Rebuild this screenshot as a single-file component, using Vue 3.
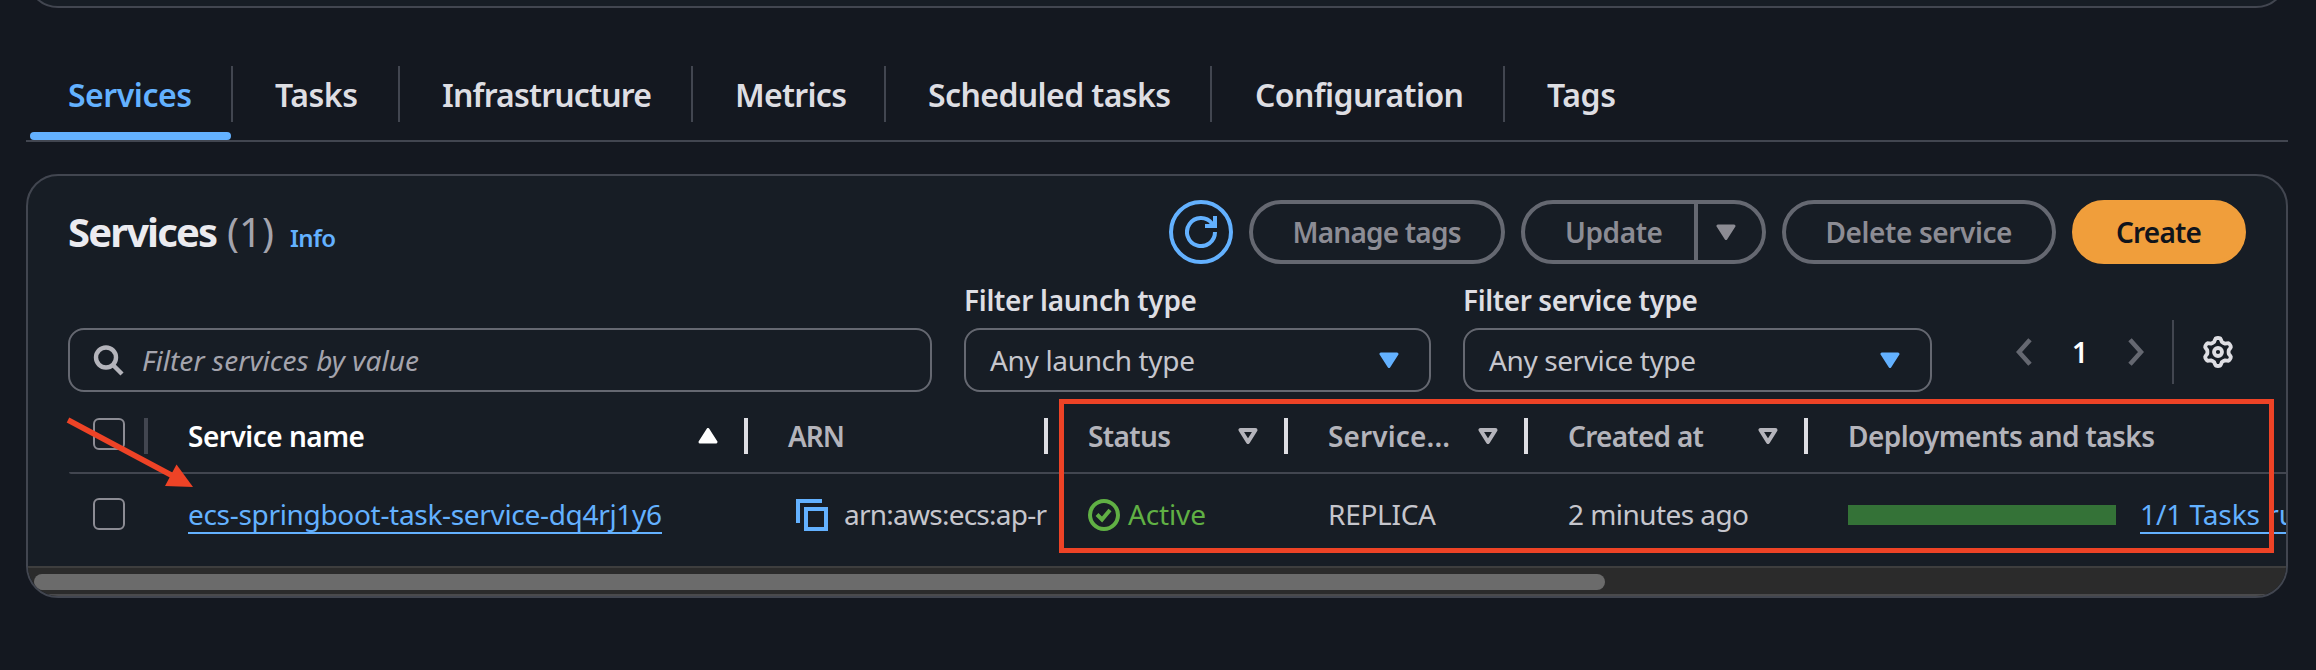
<script setup>
// Adjusts letter spacing so that a label occupies the given width.
const vFit = {
  mounted(el, { value }) {
    const natural = el.getBoundingClientRect().width
    const gaps = el.textContent.length - 1
    const spacing = (value - natural) / gaps
    el.style.letterSpacing = spacing + 'px'
    el.style.marginRight = -spacing + 'px'
  },
}

const tabs = [
  { label: 'Services', fit: 124, tab: 'services' },
  { label: 'Tasks', fit: 83, tab: 'tasks' },
  { label: 'Infrastructure', fit: 210, tab: 'infrastructure' },
  { label: 'Metrics', fit: 112, tab: 'metrics' },
  { label: 'Scheduled tasks', fit: 243, tab: 'scheduled' },
  { label: 'Configuration', fit: 209, tab: 'configuration' },
  { label: 'Tags', fit: 69, tab: 'tags' },
]

const columns = [
  { label: 'Service name', fit: 177, sort: 'asc' },
  { label: 'ARN', fit: 57 },
  { label: 'Status', fit: 83, sort: 'none' },
  { label: 'Service...', fit: 122, sort: 'none' },
  { label: 'Created at', fit: 136, sort: 'none' },
  { label: 'Deployments and tasks', fit: 307 },
]

// Six-lobed gear outline.
const gear = Array.from({ length: 72 }, (_, i) => {
  const a = (i / 72) * Math.PI * 2
  const r = 12.3 + 1.75 * Math.tanh(2 * Math.cos(6 * (a + Math.PI / 2)))
  return `${(16 + r * Math.cos(a)).toFixed(2)},${(16 + r * Math.sin(a)).toFixed(2)}`
}).join(' ')
</script>

<template>
  <div class="page">
    <div class="previous-card"></div>

    <nav class="tabs">
      <div v-for="(t, i) in tabs" :key="t.tab" class="tab" :class="['tab-' + t.tab, { active: i === 0 }]">
        <span v-fit="t.fit" class="txt">{{ t.label }}</span>
      </div>
    </nav>

    <section class="card">
      <header class="card-head">
        <h2 class="title"><span v-fit="150" class="txt">Services</span></h2>
        <span v-fit="47" class="txt count">(1)</span>
        <a v-fit="46" class="txt info">Info</a>
        <div class="actions">
          <button class="btn refresh">
            <svg width="32" height="32" viewBox="0 0 32 32" fill="none" stroke="currentColor" stroke-width="4">
              <path d="M30 16A14 14 0 1 1 27 7.4L29 10" /><path d="M30 0V10H20" />
            </svg>
          </button>
          <button class="btn manage"><span v-fit="169" class="txt">Manage tags</span></button>
          <div class="btn split">
            <span class="split-main"><span v-fit="98" class="txt">Update</span></span>
            <span class="split-arrow">
              <svg width="20" height="16" viewBox="0 0 20 16"><path class="solid" d="M2 2H18L10 14.5Z" /></svg>
            </span>
          </div>
          <button class="btn delete"><span v-fit="187" class="txt">Delete service</span></button>
          <button class="btn create"><span v-fit="86" class="txt">Create</span></button>
        </div>
      </header>

      <div class="filters">
        <div class="field search">
          <svg width="32" height="32" viewBox="0 0 32 32" fill="none" stroke="currentColor" stroke-width="4.4">
            <circle cx="13" cy="13.5" r="10" /><path d="M20 21L29 30" />
          </svg>
          <span v-fit="277" class="txt">Filter services by value</span>
        </div>
        <div class="filter launch">
          <label><span v-fit="233" class="txt">Filter launch type</span></label>
          <div class="field select">
            <span v-fit="205" class="txt">Any launch type</span>
            <svg width="20" height="16" viewBox="0 0 20 16"><path class="solid" d="M2 2H18L10 14.5Z" /></svg>
          </div>
        </div>
        <div class="filter service">
          <label><span v-fit="235" class="txt">Filter service type</span></label>
          <div class="field select">
            <span v-fit="207" class="txt">Any service type</span>
            <svg width="20" height="16" viewBox="0 0 20 16"><path class="solid" d="M2 2H18L10 14.5Z" /></svg>
          </div>
        </div>
        <div class="pager">
          <svg class="chev" width="16" height="28" viewBox="0 0 16 28"><path d="M14 1.8L3 14L14 26.2" /></svg>
          <span class="page-no">1</span>
          <svg class="chev" width="16" height="28" viewBox="0 0 16 28"><path d="M2 1.8L13 14L2 26.2" /></svg>
          <span class="divider"></span>
          <svg class="gear" width="32" height="32" viewBox="0 0 32 32">
            <polygon :points="gear" /><circle cx="16" cy="16" r="4" />
          </svg>
        </div>
      </div>

      <div class="table">
        <div class="row head">
          <div class="cell check"><span class="box"></span></div>
          <div v-for="(c, i) in columns" :key="i" class="cell" :class="{ sorted: c.sort === 'asc' }">
            <span v-fit="c.fit" class="txt">{{ c.label }}</span>
            <svg v-if="c.sort" width="20" height="16" viewBox="0 0 20 16">
              <path v-if="c.sort === 'asc'" class="solid" d="M10 1.5L18 14H2Z" />
              <path v-else class="hollow" d="M2.5 2H17.5L10 14Z" />
            </svg>
          </div>
        </div>
        <div class="row body">
          <div class="cell check"><span class="box"></span></div>
          <div class="cell"><a v-fit="474" class="txt link">ecs-springboot-task-service-dq4rj1y6</a></div>
          <div class="cell arn">
            <svg width="32" height="32" viewBox="0 0 32 32" fill="none" stroke="currentColor" stroke-width="4">
              <path d="M2 24V2H26" /><path d="M10 10H30V30H10Z" />
            </svg>
            <span v-fit="203" class="txt">arn:aws:ecs:ap-r</span>
          </div>
          <div class="cell status">
            <svg width="32" height="32" viewBox="0 0 32 32" fill="none" stroke="currentColor" stroke-width="4">
              <circle cx="16" cy="16" r="14" /><path d="M9 15.5L14 20.5L22 11" />
            </svg>
            <span v-fit="78" class="txt">Active</span>
          </div>
          <div class="cell"><span v-fit="108" class="txt">REPLICA</span></div>
          <div class="cell"><span v-fit="181" class="txt">2 minutes ago</span></div>
          <div class="cell deploy">
            <span class="bar"></span>
            <a v-fit="232" class="txt link">1/1 Tasks running</a>
          </div>
        </div>
      </div>

      <div class="scrollbar"><div class="thumb"></div></div>
    </section>

    <div class="highlight"></div>
    <svg class="arrow" width="140" height="80" viewBox="0 0 140 80">
      <path class="shaft" d="M8 10L113 66" />
      <path class="tip" d="M133 77L116.500 54.500L105 76Z" />
    </svg>
  </div>
</template>

<style>
body { margin: 0; background: #141820; }
</style>

<style scoped>
.page {
  position: relative; box-sizing: border-box; width: 2316px; height: 670px; overflow: hidden;
  padding: 0 28px 0 26px; background: #141820; color: #c6c6cd;
  font-family: "Noto Sans", "Open Sans", sans-serif; font-size: 28px; line-height: 36px;
}
.page * { box-sizing: border-box; }
svg { display: block; flex: none; }
.txt { display: inline-block; white-space: nowrap; flex: none; }
.solid { fill: currentColor; stroke: currentColor; stroke-width: 3; stroke-linejoin: round; }
.hollow { fill: none; stroke: currentColor; stroke-width: 4; stroke-linejoin: round; }

.previous-card {
  height: 100px; margin-top: -92px; border: 2px solid #424650; border-radius: 32px; background: #171d25;
}
.tabs { display: flex; align-items: flex-start; height: 134px; padding: 58px 0 0 4px; border-bottom: 2px solid #424650; }
.tab {
  position: relative; display: flex; height: 56px; align-items: center; padding-left: 42px;
  border-right: 2px solid #424650; font-size: 32px; font-weight: 600; color: #dedee3;
}
.tab .txt { margin-top: 1px; }
.tab-services { width: 203px; padding-left: 38px; }
.tab-tasks { width: 167px; }
.tab-infrastructure { width: 293px; }
.tab-metrics { width: 193px; }
.tab-scheduled { width: 326px; }
.tab-configuration { width: 293px; padding-left: 43px; }
.tab-tags { border-right: 0; }
.tab.active { color: #63b1ff; }
.tab.active::after {
  content: ""; position: absolute; left: 0; width: 201px; bottom: -18px; height: 8px;
  border-radius: 4px; background: #63b1ff;
}

.card {
  display: flex; flex-direction: column; height: 424px; margin-top: 32px; overflow: hidden;
  border: 2px solid #424650; border-radius: 32px; background: #171d25;
}
.card-head { display: flex; align-items: center; height: 64px; flex: none; margin-top: 24px; padding: 0 40px; }
.title { margin: 0 9px 0 0; font-size: 40px; font-weight: 700; line-height: 50px; color: #ebebf0; }
.count { font-size: 40px; color: #a4a4ad; line-height: 50px; }
.info { margin-left: 16px; font-size: 24px; font-weight: 600; color: #63b1ff; padding-top: 12px; }
.actions { display: flex; gap: 16px; margin-left: auto; }
.btn {
  display: flex; align-items: center; justify-content: center; height: 64px; padding: 0;
  border: 4px solid #656871; border-radius: 32px; background: transparent;
  color: #8c8c94; font: 600 28px/36px "Noto Sans", sans-serif;
}
.refresh { width: 64px; padding: 0; color: #63b1ff; border-color: #63b1ff; }
.manage { width: 256px; }
.split { width: 245px; padding: 0; justify-content: flex-start; }
.split-main { display: flex; align-items: center; width: 173px; height: 56px; padding-left: 40px; border-right: 4px solid #656871; }
.split-arrow { padding-left: 18px; }
.delete { width: 274px; }
.create { width: 174px; border-color: #f09e3b; background: #f09e3b; color: #10141b; }

.filters { display: flex; align-items: flex-end; flex: none; height: 128px; padding: 0 40px; }
.field {
  display: flex; align-items: center; height: 64px; border: 2px solid #656871; border-radius: 16px;
}
.search { width: 864px; padding-left: 23px; gap: 17px; color: #a4a4ad; font-style: italic; }
.search svg { color: #b4b4bb; }
.filter { margin-left: 32px; }
.launch { width: 467px; }
.service { width: 469px; }
.filter label { display: flex; height: 36px; margin-bottom: 10px; font-weight: 600; color: #dedee3; }
.select { justify-content: space-between; padding: 0 30px 0 24px; }
.select svg { color: #63b1ff; }
.pager { display: flex; align-items: center; height: 64px; margin: 0 0 8px auto; padding-right: 12px; }
.chev { fill: none; stroke: #656871; stroke-width: 4.6; }
.page-no { width: 96px; text-align: center; font-weight: 600; color: #fff; }
.divider { width: 2px; height: 64px; margin: 0 28px; background: #424650; }
.gear { fill: none; stroke: #dedee3; stroke-width: 3.8; stroke-linejoin: round; }

.table { height: 174px; flex: none; padding-left: 41px; }
.row { display: grid; grid-template-columns: 79px 600px 300px 240px 240px 280px 480px; }
.head { height: 82px; padding-top: 6px; border-bottom: 2px solid #424650; border-bottom-left-radius: 2px; font-weight: 600; color: #b4b4bb; }
.body { height: 80px; }
.cell { position: relative; display: flex; align-items: center; min-width: 0; padding-left: 40px; }
.head .cell { justify-content: space-between; padding-right: 30px; }
.head .cell::after {
  content: ""; position: absolute; right: 0; top: 20px; width: 4px; height: 36px; background: #dedee3;
}
.head .cell:last-child::after { display: none; }
.head .check::after { background: #424650; }
.head .sorted { color: #fff; }
.head .cell svg, .head .txt { margin-top: 2px; }
.check, .head .check { padding: 0 0 0 24px; }
.head .check { justify-content: flex-start; }
.box { width: 32px; height: 32px; border: 2px solid #8c8c94; border-radius: 6px; }
.head .box { margin-top: -2px; }
.link { height: 38px; margin-top: 2px; color: #63b1ff; border-bottom: 2px solid #63b1ff; }
.arn { overflow: hidden; padding-left: 48px; padding-right: 2px; gap: 16px; }
.arn svg { color: #63b1ff; margin-top: 2px; }
.status { color: #60b044; gap: 8px; }
.status svg { margin-top: 2px; }
.deploy { gap: 24px; }
.bar { flex: none; width: 268px; height: 20px; margin-top: 2px; background: #347237; }

.scrollbar { height: 30px; flex: none; padding: 6px; border-top: 2px solid #3e3e3e; border-bottom: 2px solid #4a4a4c; background: #2b2b2b; }
.thumb { width: 1571px; height: 16px; border-radius: 8px; background: #6b6b6b; }

.highlight { position: absolute; left: 1059px; top: 399px; width: 1215px; height: 154px; border: 5px solid #ee4326; }
.arrow { position: absolute; left: 60px; top: 410px; }
.shaft { fill: none; stroke: #ee4326; stroke-width: 5.500; }
.tip { fill: #ee4326; }
</style>
